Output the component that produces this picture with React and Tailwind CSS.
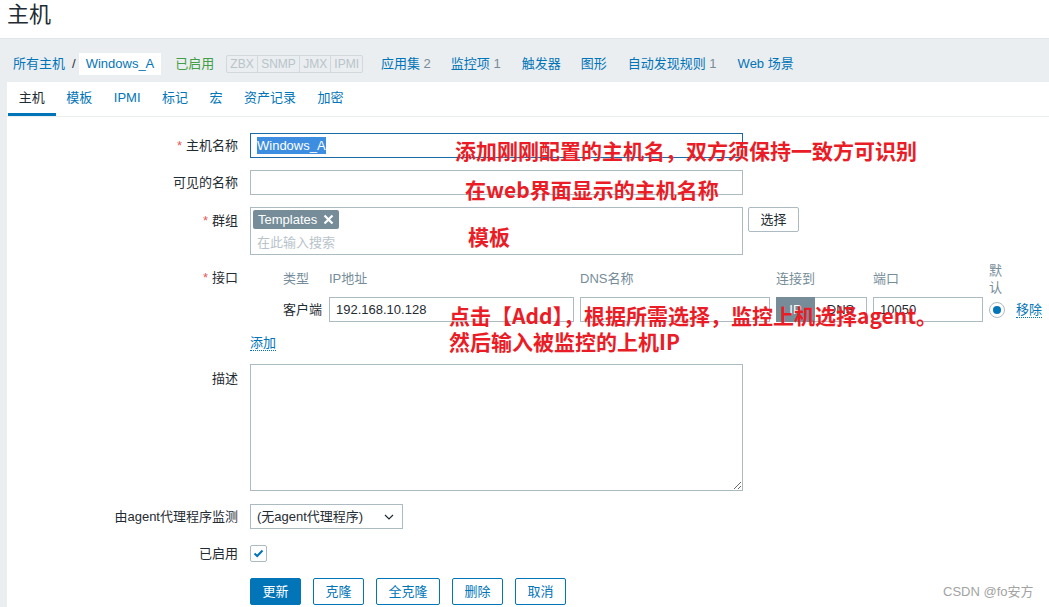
import React from "react";

const blue = "text-[#0275b8]";

function Tab({ label, active }) {
  return (
    <div
      className={`h-[34px] px-[10.75px] flex items-center border-b-[3px] ${
        active ? "border-[#0275b8] text-[#1f2c33]" : "border-transparent text-[#0275b8]"
      }`}
    >
      {label}
    </div>
  );
}

function Label({ children, required, className = "" }) {
  return (
    <div className={`w-[231px] shrink-0 text-right ${className}`}>
      {required && <span className="text-[#e45959] mr-[4px]">*</span>}
      {children}
    </div>
  );
}

function Btn({ children, primary, w }) {
  return (
    <div
      className={`h-[27px] ${w} flex items-center justify-center rounded-[2px] border ${
        primary
          ? "bg-[#0275b8] border-[#0275b8] text-white"
          : "bg-white border-[#0275b8] text-[#0275b8]"
      }`}
    >
      {children}
    </div>
  );
}

export default function App() {
  return (
    <div className="relative w-[1049px] h-[607px] overflow-hidden bg-white text-[13px] text-[#1f2c33] font-['Liberation_Sans','Noto_Sans_CJK_SC',sans-serif]">
      {/* HEADER */}
      <div className="h-[38px] px-[7px]">
        <h1 className="text-[22px] leading-[30px] font-normal">主机</h1>
      </div>

      <div className="bg-[#ebeef0] border-t border-[#e0e5e8] pl-[7px] h-[569px] flex flex-col">
        {/* BREADCRUMB */}
        <div className="h-[43px] pt-[6px] flex items-center ml-[6px] whitespace-nowrap">
          <span className={blue}>所有主机</span>
          <span className="ml-[7px] mr-[3px] text-[#1f2c33]">/</span>
          <span className={`bg-white px-[7px] h-[22px] flex items-center ${blue}`}>Windows_A</span>
          <span className="ml-[14px] text-[#429e47]">已启用</span>
          <div className="ml-[12px] flex h-[18px] border border-[#d1d9dd] text-[#b8c4ca] text-[12px] rounded-[2px]">
            <span className="px-[3px] flex items-center">ZBX</span>
            <span className="px-[3.5px] flex items-center border-l border-[#d1d9dd]">SNMP</span>
            <span className="px-[3px] flex items-center border-l border-[#d1d9dd]">JMX</span>
            <span className="px-[3px] flex items-center border-l border-[#d1d9dd]">IPMI</span>
          </div>
          <span className={`ml-[18px] ${blue}`}>应用集 <span className="text-[#768d99]">2</span></span>
          <span className={`ml-[20px] ${blue}`}>监控项 <span className="text-[#768d99]">1</span></span>
          <span className={`ml-[21px] ${blue}`}>触发器</span>
          <span className={`ml-[20px] ${blue}`}>图形</span>
          <span className={`ml-[21px] ${blue}`}>自动发现规则 <span className="text-[#768d99]">1</span></span>
          <span className={`ml-[21px] ${blue}`}>Web 场景</span>
        </div>

        {/* PANEL */}
        <div className="bg-white flex-1">
          <div className="flex border-b border-[#ebeef0] pl-[1px]">
            <Tab label="主机" active />
            <Tab label="模板" />
            <Tab label="IPMI" />
            <Tab label="标记" />
            <Tab label="宏" />
            <Tab label="资产记录" />
            <Tab label="加密" />
          </div>

          {/* FORM */}
          <div className="flex flex-col">
            <div className="mt-[16px] flex items-center h-[25px]">
              <Label required>主机名称</Label>
              <div className="ml-[12px] w-[493px] h-[25px] border border-[#1b6aa5] flex items-center pl-[6px]">
                <span className="bg-[#3d8ee0] text-white leading-[17px]">Windows_A</span>
              </div>
            </div>

            <div className="mt-[12px] flex items-center h-[25px]">
              <Label>可见的名称</Label>
              <div className="ml-[12px] w-[493px] h-[25px] border border-[#acbbc2]" />
            </div>

            <div className="mt-[12px] flex items-start">
              <Label required className="pt-[4px]">群组</Label>
              <div className="ml-[12px] w-[493px] h-[48px] border border-[#acbbc2] px-[2px] pt-[2px]">
                <div className="inline-flex items-center h-[19px] bg-[#768d99] text-white rounded-[2px] px-[5px] gap-[6px]">
                  Templates
                  <svg width="11" height="11" viewBox="0 0 11 11">
                    <path d="M1.5 1.5 L9.5 9.5 M9.5 1.5 L1.5 9.5" stroke="white" strokeWidth="2.2" />
                  </svg>
                </div>
                <div className="text-[#b8c4ca] pl-[4px] mt-[3px]">在此输入搜索</div>
              </div>
              <div className="ml-[5px] w-[51px] h-[25px] border border-[#acbbc2] rounded-[2px] flex items-center justify-center">
                选择
              </div>
            </div>

            {/* INTERFACES */}
            <div className="mt-[7px] flex items-start">
              <Label required className="h-[32px] flex items-center justify-end">接口</Label>
              <div className="ml-[12px] pl-[33px]">
                <div className="grid grid-cols-[46px_251px_196px_97px_116px_27px_auto] h-[32px] items-center text-[#768d99]">
                  <span>类型</span>
                  <span>IP地址</span>
                  <span>DNS名称</span>
                  <span>连接到</span>
                  <span>端口</span>
                  <span className="w-[14px] leading-[17px]">默认</span>
                  <span />
                </div>
                <div className="mt-[3px] grid grid-cols-[46px_251px_196px_97px_116px_27px_auto] h-[25px] items-center whitespace-nowrap">
                  <span>客户端</span>
                  <div className="w-[245px] h-[25px] border border-[#acbbc2] flex items-center pl-[6px]">192.168.10.128</div>
                  <div className="w-[190px] h-[25px] border border-[#acbbc2]" />
                  <div className="w-[91px] h-[25px] flex">
                    <div className="w-[39px] bg-[#768d99] text-white flex items-center justify-center">IP</div>
                    <div className="w-[52px] border border-l-0 border-[#acbbc2] flex items-center justify-center">DNS</div>
                  </div>
                  <div className="w-[110px] h-[25px] border border-[#acbbc2] flex items-center pl-[6px]">10050</div>
                  <div className="w-[16px] h-[16px] rounded-full border border-[#acbbc2] flex items-center justify-center">
                    <div className="w-[8px] h-[8px] rounded-full bg-[#0275b8]" />
                  </div>
                  <span className={`${blue} border-b border-dotted border-[#0275b8] leading-[15px]`}>移除</span>
                </div>
              </div>
            </div>

            <div className="mt-[13px] flex h-[16px] items-center">
              <div className="w-[231px] shrink-0" />
              <span className={`ml-[12px] ${blue} border-b border-dotted border-[#0275b8] leading-[14px]`}>添加</span>
            </div>

            <div className="mt-[13px] flex items-start">
              <Label className="pt-[5px]">描述</Label>
              <textarea
                readOnly
                className="ml-[12px] w-[493px] h-[127px] border border-[#acbbc2] outline-none"
              />
            </div>

            <div className="mt-[13px] flex items-center h-[25px]">
              <Label>由agent代理程序监测</Label>
              <div className="ml-[12px] w-[153px] h-[25px] border border-[#acbbc2] flex items-center justify-between pl-[6px] pr-[8px]">
                <span>(无agent代理程序)</span>
                <svg width="10" height="6" viewBox="0 0 10 6">
                  <path d="M1 1 L5 5 L9 1" fill="none" stroke="#1f2c33" strokeWidth="1.2" />
                </svg>
              </div>
            </div>

            <div className="mt-[16px] flex items-center h-[17px]">
              <Label>已启用</Label>
              <div className="ml-[12px] w-[17px] h-[17px] border border-[#acbbc2] rounded-[2px] flex items-center justify-center">
                <svg width="11" height="9" viewBox="0 0 11 9">
                  <path d="M1.5 4.5 L4.2 7 L9.5 1.5" fill="none" stroke="#0275b8" strokeWidth="2" />
                </svg>
              </div>
            </div>

            <div className="mt-[16px] flex">
              <div className="w-[231px] shrink-0" />
              <div className="ml-[12px] flex gap-[12px]">
                <Btn primary w="w-[51px]">更新</Btn>
                <Btn w="w-[51px]">克隆</Btn>
                <Btn w="w-[64px]">全克隆</Btn>
                <Btn w="w-[51px]">删除</Btn>
                <Btn w="w-[51px]">取消</Btn>
              </div>
            </div>
          </div>
        </div>
      </div>

      {/* ANNOTATIONS */}
      <div className="absolute inset-0 pointer-events-none font-['Noto_Sans_CJK_SC',sans-serif] font-bold text-[21px] leading-[21px] text-[#ea1d27] whitespace-nowrap">
        <div className="absolute left-[455px] top-[140px]">添加刚刚配置的主机名，双方须保持一致方可识别</div>
        <div className="absolute left-[465px] top-[179px]">在web界面显示的主机名称</div>
        <div className="absolute left-[468px] top-[226px]">模板</div>
        <div className="absolute left-[449px] top-[305px]">点击【Add】，根据所需选择，监控上机选择agent。</div>
        <div className="absolute left-[449px] top-[331px]">然后输入被监控的上机IP</div>
      </div>

      <div className="absolute left-[943px] top-[583px] text-[13px] leading-[17px] text-[#a3a3a3] font-['Liberation_Sans','Noto_Sans_CJK_SC',sans-serif]">
        CSDN @fo安方
      </div>
    </div>
  );
}
